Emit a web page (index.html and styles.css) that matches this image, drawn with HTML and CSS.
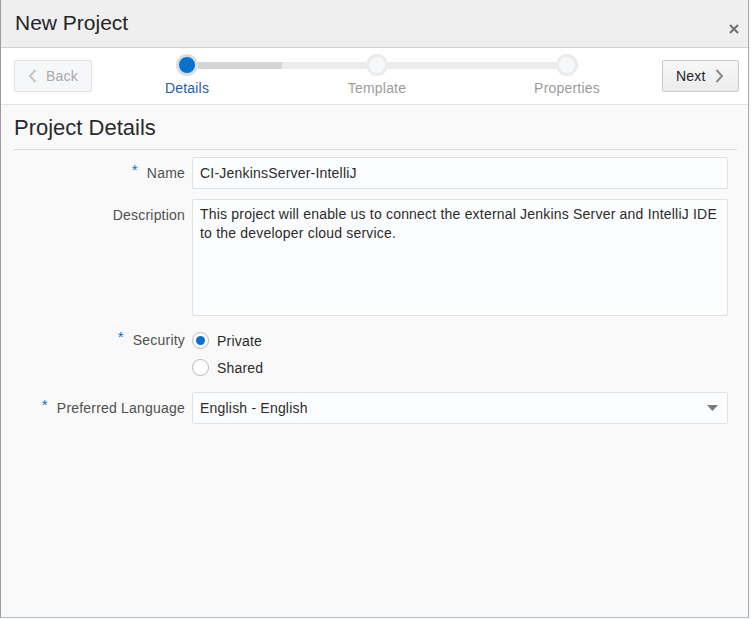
FILE: index.html
```
<!DOCTYPE html>
<html>
<head>
<meta charset="utf-8">
<link rel="stylesheet" href="styles.css">
</head>
<body>
<div class="dialog">
  <div class="header">
    <div class="title">New Project</div>
    <button class="close" aria-label="Close">
      <svg width="10" height="10" viewBox="0 0 10 10"><path d="M1 1 L9 9 M9 1 L1 9" stroke="#6f6f6f" stroke-width="2" stroke-linecap="butt"/></svg>
    </button>
  </div>
  <div class="trainbar">
    <button class="btn btn-back">
      <svg width="9" height="14" viewBox="0 0 9 14"><path d="M7.5 1 L2 7 L7.5 13" fill="none" stroke="#c6c6c6" stroke-width="2"/></svg>
      <span>Back</span>
    </button>
    <div class="train">
      <div class="step">
        <div class="track"><span class="seg seg-none"></span><span class="dot dot-active"></span><span class="seg seg-done"></span></div>
        <div class="step-label active">Details</div>
      </div>
      <div class="step">
        <div class="track"><span class="seg"></span><span class="dot"></span><span class="seg"></span></div>
        <div class="step-label">Template</div>
      </div>
      <div class="step">
        <div class="track"><span class="seg"></span><span class="dot"></span><span class="seg seg-none"></span></div>
        <div class="step-label">Properties</div>
      </div>
    </div>
    <button class="btn btn-next">
      <span>Next</span>
      <svg width="9" height="14" viewBox="0 0 9 14"><path d="M1.5 1 L7 7 L1.5 13" fill="none" stroke="#8a8a8a" stroke-width="2"/></svg>
    </button>
  </div>
  <div class="content">
    <h2 class="section-title">Project Details</h2>
    <div class="form">
      <div class="label"><span class="req">*</span>Name</div>
      <div class="field input">CI-JenkinsServer-IntelliJ</div>

      <div class="label label-top">Description</div>
      <div class="field textarea">This project will enable us to connect the external Jenkins Server and IntelliJ IDE to the developer cloud service.</div>

      <div class="label label-radio"><span class="req">*</span>Security</div>
      <div class="radios">
        <div class="radio-row"><span class="radio checked"></span>Private</div>
        <div class="radio-row"><span class="radio"></span>Shared</div>
      </div>

      <div class="label"><span class="req">*</span>Preferred Language</div>
      <div class="field input select">
        <span>English - English</span>
        <svg width="11" height="7" viewBox="0 0 11 7"><path d="M0 0 H11 L5.5 6 Z" fill="#7a7a7a"/></svg>
      </div>
    </div>
  </div>
</div>
</body>
</html>
```
FILE: styles.css
```
* { box-sizing: border-box; }
html, body { margin: 0; padding: 0; background: #f8f8f8; }
body {
  font-family: "Liberation Sans", Arial, sans-serif;
  font-size: 14px;
  letter-spacing: 0.2px;
  color: #333;
  width: 751px;
  height: 619px;
  overflow: hidden;
}
.dialog {
  width: 749px;
  height: 618px;
  border-left: 1px solid #9c9c9c;
  border-right: 1px solid #a4adb6;
  border-bottom: 1px solid #b3bfca;
  background: #f9f9f9;
  display: flex;
  flex-direction: column;
}
.header {
  height: 48px;
  background: #efefef;
  border-bottom: 1px solid #c9d0d6;
  display: flex;
  align-items: center;
  justify-content: space-between;
  padding: 0 6px 0 14px;
  flex: none;
}
.title {
  font-size: 21px;
  letter-spacing: 0;
  color: #252525;
  line-height: 26px;
  margin-top: -1px;
}
.close {
  border: 0;
  background: none;
  padding: 0;
  width: 16px;
  height: 16px;
  margin-top: 10px;
  display: flex;
  align-items: center;
  justify-content: center;
}
.trainbar {
  height: 57px;
  background: #fff;
  border-bottom: 1px solid #e3e3e3;
  display: flex;
  align-items: flex-start;
  padding: 0 9px 0 13px;
  flex: none;
}
.btn {
  margin-top: 12px;
  height: 32px;
  font-family: inherit;
  font-size: 14px;
  letter-spacing: 0.2px;
  border-radius: 2px;
  display: flex;
  align-items: center;
  padding: 0;
  flex: none;
}
.btn-back {
  width: 78px;
  background: #f6f7f8;
  border: 1px solid #dfe3e6;
  color: #a9a9a9;
  padding-left: 13px;
  gap: 9px;
}
.btn-next {
  width: 77px;
  background: linear-gradient(#f7f7f7, #ececec);
  border: 1px solid #c4ccd3;
  color: #262626;
  padding-left: 13px;
  gap: 9px;
}
.train {
  flex: 1;
  display: flex;
}
.step {
  flex: 1;
  display: flex;
  flex-direction: column;
  align-items: stretch;
}
.track {
  height: 22px;
  margin-top: 6px;
  display: flex;
  align-items: center;
}
.seg {
  flex: 1;
  height: 7px;
  background: #ececec;
}
.seg-done { background: #d5d5d5; }
.seg-none { background: transparent; }
.dot {
  width: 22px;
  height: 22px;
  border-radius: 50%;
  background: #f5f7f9;
  border: 3px solid #ebebeb;
  flex: none;
}
.dot-active {
  background: #0572ce;
  border: 3px solid #dcdcdc;
}
.step-label {
  text-align: center;
  color: #9b9b9b;
  line-height: 18px;
  margin-top: 3px;
}
.step-label.active { color: #1c5ea8; }
.content {
  flex: 1;
  padding: 0 11px 0 13px;
}
.section-title {
  margin: 0;
  font-size: 22px;
  letter-spacing: 0;
  font-weight: normal;
  color: #2a2a2a;
  line-height: 26px;
  padding: 10px 0 8px 0;
  border-bottom: 1px solid #dcdcdc;
}
.form {
  display: grid;
  grid-template-columns: 171px 536px;
  column-gap: 7px;
  row-gap: 10px;
  margin-top: 7px;
}
.label {
  color: #505050;
  display: flex;
  justify-content: flex-end;
  align-items: center;
  white-space: nowrap;
}
.label-top { align-items: flex-start; padding-top: 8px; }
.label-radio { align-items: flex-start; padding-top: 6px; }
.req {
  color: #0572ce;
  font-size: 15px;
  margin-right: 9px;
  position: relative;
  top: -4px;
}
.field {
  background: #fcfdfe;
  border: 1px solid #dde2e6;
  border-radius: 2px;
  color: #2b2b2b;
}
.input {
  height: 32px;
  padding: 0 7px;
  display: flex;
  align-items: center;
}
.textarea {
  height: 117px;
  padding: 5px 7px;
  line-height: 19px;
}
.select { justify-content: space-between; padding-right: 9px; }
.radios {
  display: flex;
  flex-direction: column;
  margin: 1px 0;
}
.radio-row {
  height: 27px;
  display: flex;
  align-items: center;
  color: #2b2b2b;
}
.radio {
  width: 17px;
  height: 17px;
  border-radius: 50%;
  border: 1px solid #b4b9be;
  background: #fff;
  margin-right: 8px;
  display: flex;
  align-items: center;
  justify-content: center;
}
.radio.checked::after {
  content: "";
  width: 9px;
  height: 9px;
  border-radius: 50%;
  background: #0572ce;
}
```
